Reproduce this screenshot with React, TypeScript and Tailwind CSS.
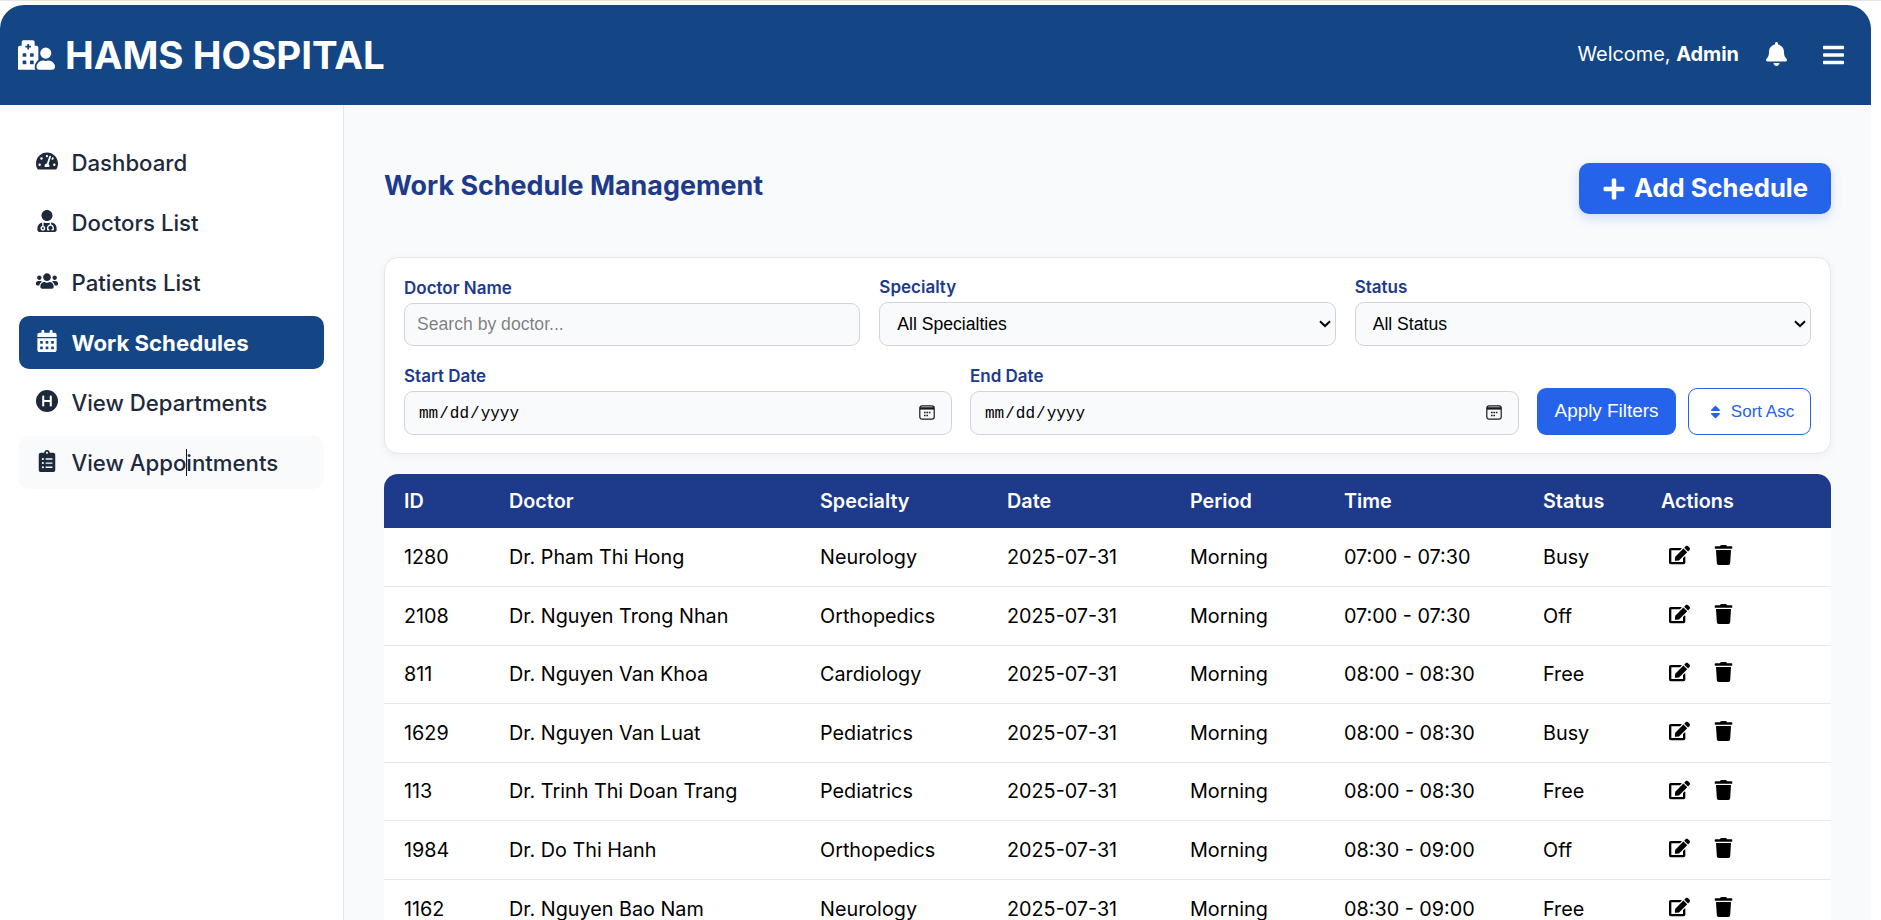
import React from "react";
import { FaHospitalUser, FaBell, FaBars, FaTachometerAlt, FaUserMd, FaUsers, FaCalendarAlt, FaClipboardList, FaPlus, FaSort, FaEdit, FaTrash } from "react-icons/fa";
import { FaCircleH } from "react-icons/fa6";

const nav = [
  { label: "Dashboard", Icon: FaTachometerAlt },
  { label: "Doctors List", Icon: FaUserMd },
  { label: "Patients List", Icon: FaUsers },
  { label: "Work Schedules", Icon: FaCalendarAlt, active: true },
  { label: "View Departments", Icon: FaCircleH },
  { label: "View Appointments", Icon: FaClipboardList, hover: true },
];

const rows = [
  ["1280", "Dr. Pham Thi Hong", "Neurology", "2025-07-31", "Morning", "07:00 - 07:30", "Busy"],
  ["2108", "Dr. Nguyen Trong Nhan", "Orthopedics", "2025-07-31", "Morning", "07:00 - 07:30", "Off"],
  ["811", "Dr. Nguyen Van Khoa", "Cardiology", "2025-07-31", "Morning", "08:00 - 08:30", "Free"],
  ["1629", "Dr. Nguyen Van Luat", "Pediatrics", "2025-07-31", "Morning", "08:00 - 08:30", "Busy"],
  ["113", "Dr. Trinh Thi Doan Trang", "Pediatrics", "2025-07-31", "Morning", "08:00 - 08:30", "Free"],
  ["1984", "Dr. Do Thi Hanh", "Orthopedics", "2025-07-31", "Morning", "08:30 - 09:00", "Off"],
  ["1162", "Dr. Nguyen Bao Nam", "Neurology", "2025-07-31", "Morning", "08:30 - 09:00", "Free"],
];

const heads = ["ID", "Doctor", "Specialty", "Date", "Period", "Time", "Status", "Actions"];
const widths = [105, 311, 187, 183, 154, 199, 118, 190];

const inputCls =
  "w-full rounded-[9px] border border-[#d1d5db] bg-[#f8fafc] text-black outline-none";

function Label({ children }: { children: React.ReactNode }) {
  return <label className="mb-[3px] block h-[23px] text-[17px] leading-[23px] font-semibold text-[#1e3a8a]">{children}</label>;
}

function Select({ value }: { value: string }) {
  return (
    <div className="relative">
      <select className={inputCls + " h-[44px] appearance-none px-[17px] font-['Liberation_Sans',sans-serif] text-[17.6px]"}>
        <option>{value}</option>
      </select>
      <svg viewBox="0 0 12 8" className="pointer-events-none absolute right-[5px] top-[18px] h-[8px] w-[12px]" fill="none" stroke="#000" strokeWidth="2">
        <path d="M1 1.2 6 6 11 1.2" />
      </svg>
    </div>
  );
}

function DateField({ label, width }: { label: string; width: string }) {
  return (
    <div className={width}>
      <Label>{label}</Label>
      <div className="relative">
        <input
          type="date"
          className={inputCls + " h-[44px] px-[13px] pt-[2px] font-['Liberation_Mono',monospace] text-[16px] [&::-webkit-calendar-picker-indicator]:opacity-0"}
        />
        <svg viewBox="0 0 16 15" className="pointer-events-none absolute right-[17px] top-[14px] h-[15px] w-[16px]" fill="none" stroke="#1a1a1a" strokeWidth="1.2">
          <rect x="0.8" y="0.8" width="14.4" height="13.4" rx="2.2" />
          <path d="M1 3.4h14" strokeWidth="2.4" />
          <path d="M5 7.5h1.6M7.4 7.5H9M9.8 7.5h1.6M5 10.6h1.6M7.4 10.6H9" strokeWidth="1.5" />
        </svg>
      </div>
    </div>
  );
}

export default function App() {
  return (
    <div className="h-[920px] overflow-hidden border-t border-[#e5e5e5] bg-white pt-1 font-['Inter',sans-serif]">
      <div className="w-[1871px]">
        <header className="flex h-[100px] items-center justify-between rounded-t-[24px] bg-[#144686] pl-[18px] pr-[26px] text-white">
          <div className="flex items-center gap-[10px]">
            <FaHospitalUser className="h-[30px] w-[37px]" />
            <span className="text-[38.5px] leading-none font-bold">HAMS HOSPITAL</span>
          </div>
          <div className="flex items-center">
            <span className="text-[19.9px]">Welcome, <b className="font-bold">Admin</b></span>
            <FaBell className="ml-[26px] h-[24px] w-[23px] -translate-y-[1px]" />
            <FaBars className="ml-[34px] h-[24px] w-[23px]" />
          </div>
        </header>
        <div className="flex">
          <aside className="flex h-[815px] w-[344px] shrink-0 flex-col gap-[7px] border-r border-[#e5e7eb] bg-white pt-[31px] pl-[19px] pr-[19px]">
            {nav.map(({ label, Icon, active, hover }) => (
              <div
                key={label}
                className={
                  "relative flex h-[53px] items-center rounded-[10px] pl-[17px] text-[22.2px] " +
                  (active ? "bg-[#144686] font-bold text-white" : "font-medium text-[#1e293b] ") +
                  (hover ? "bg-[#f8fafc]" : "")
                }
              >
                <span className="flex w-[35.5px] -translate-y-[2px] justify-start">
                  <Icon className="h-[22px] w-[22px]" />
                </span>
                <span>{label}</span>
                {hover && <span className="absolute left-[167px] top-[13px] h-[27px] w-px bg-[#111827]" />}
              </div>
            ))}
          </aside>
          <main className="min-w-0 flex-1 bg-[#f9fafc] px-10 pt-[58px]">
            <div className="mb-[43px] flex items-start justify-between">
              <h2 className="mt-[2px] text-[26.9px] leading-[40px] font-bold text-[#1e3a8a]">Work Schedule Management</h2>
              <button className="flex h-[51px] w-[252px] items-center justify-center gap-[8px] rounded-[10px] bg-[#2563eb] text-[25.6px] font-bold text-white shadow-[0_4px_12px_rgba(37,99,235,0.2)]">
                <FaPlus className="h-[24px] w-[24px]" />
                Add Schedule
              </button>
            </div>

            <section className="mb-[20px] h-[197px] rounded-[14px] border border-[#e5e7eb] bg-white px-[19px] pt-[18px] shadow-[0_2px_8px_rgba(0,0,0,0.05)]">
              <div className="grid grid-cols-3 items-end gap-[19px]">
                <div>
                  <Label>Doctor Name</Label>
                  <input placeholder="Search by doctor..." className={inputCls + " h-[43px] px-[12px] font-['Liberation_Sans',sans-serif] text-[17.6px]"} />
                </div>
                <div>
                  <Label>Specialty</Label>
                  <Select value="All Specialties" />
                </div>
                <div>
                  <Label>Status</Label>
                  <Select value="All Status" />
                </div>
              </div>
              <div className="mt-[19px] flex items-end gap-[18px]">
                <DateField label="Start Date" width="w-[548px]" />
                <DateField label="End Date" width="w-[549px]" />
                <button className="h-[47px] w-[139px] rounded-[9px] bg-[#2563eb] font-['Liberation_Sans',sans-serif] text-[18.9px] font-normal text-white">Apply Filters</button>
                <button className="-ml-[6px] flex h-[47px] w-[123px] items-center justify-center gap-[10px] rounded-[9px] border border-[#2563eb] bg-white pl-[5px] font-['Liberation_Sans',sans-serif] text-[17px] text-[#2563eb]">
                  <FaSort className="h-[16px] w-[11px]" />
                  Sort Asc
                </button>
              </div>
            </section>

            <div className="overflow-hidden rounded-t-[14px] bg-white">
              <table className="w-full table-fixed border-collapse text-[19.8px] text-black">
                <colgroup>
                  {widths.map((w, i) => (
                    <col key={i} style={{ width: w }} />
                  ))}
                </colgroup>
                <thead>
                  <tr className="h-[54px] bg-[#1e3a8a] text-white">
                    {heads.map((h) => (
                      <th key={h} className="pl-5 pt-[2px] text-left font-semibold">{h}</th>
                    ))}
                  </tr>
                </thead>
                <tbody>
                  {rows.map((r) => (
                    <tr key={r[0]} className="h-[58.6px] border-b border-[#e5e7eb]">
                      {r.map((c, i) => (
                        <td key={i} className="pl-5 pt-[1px]">{c}</td>
                      ))}
                      <td className="pl-5">
                        <div className="flex -translate-y-[2px] items-center gap-[24px] pl-[8px]">
                          <FaEdit className="h-[20px] w-[21px]" />
                          <FaTrash className="h-[20px] w-[19px]" />
                        </div>
                      </td>
                    </tr>
                  ))}
                </tbody>
              </table>
            </div>
          </main>
        </div>
      </div>
    </div>
  );
}
